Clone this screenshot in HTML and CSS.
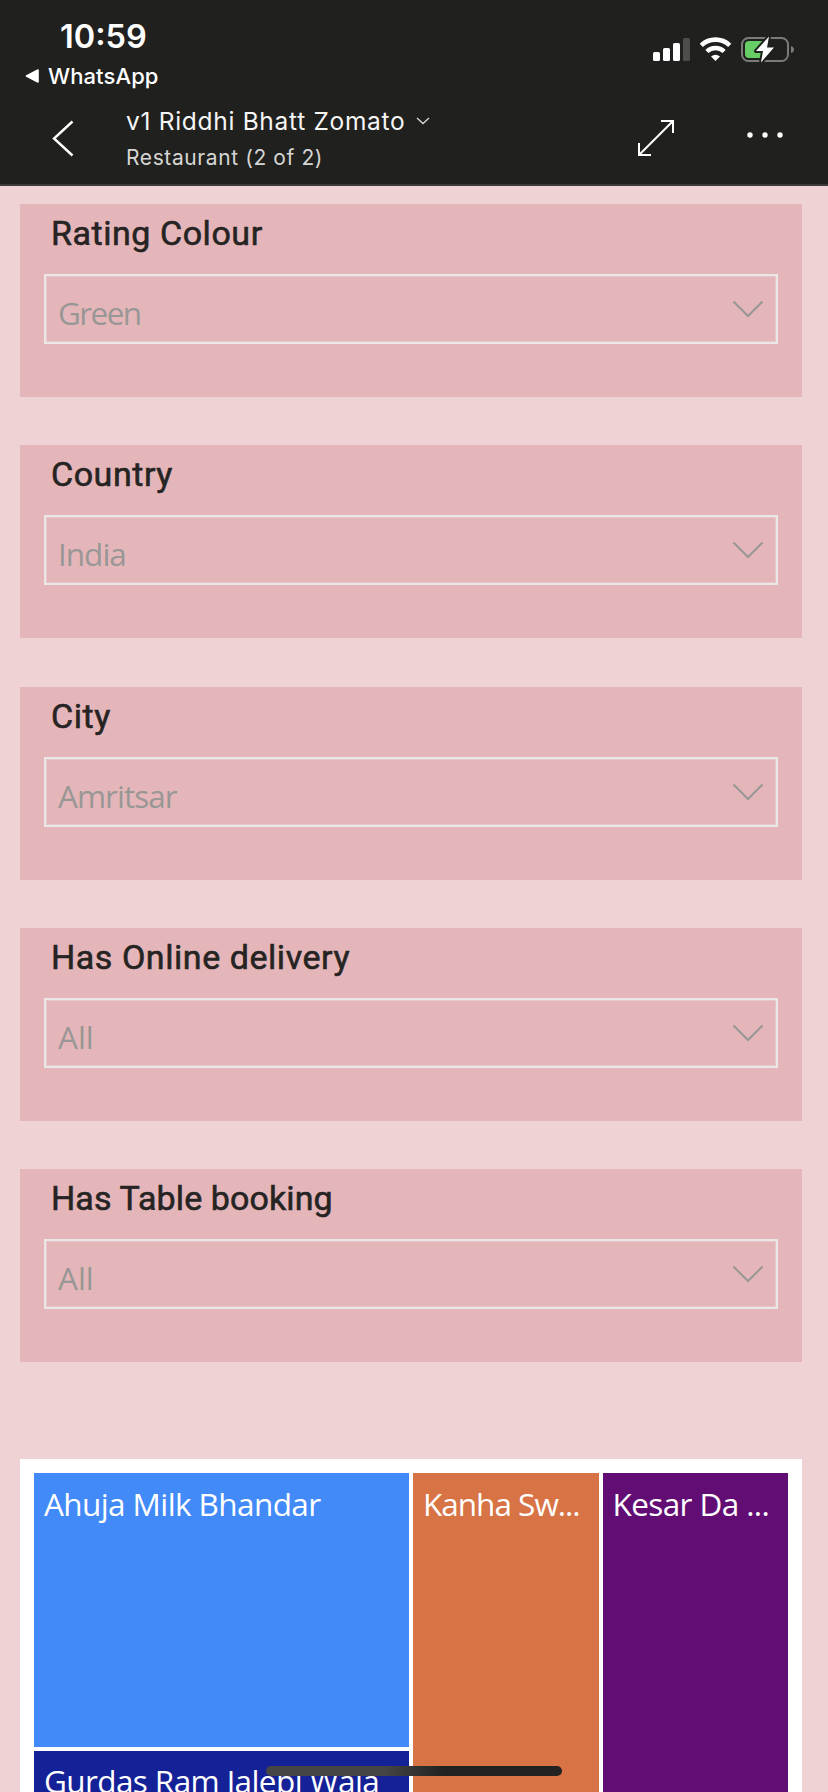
FILE: index.html
```html
<!DOCTYPE html>
<html lang="en">
<head>
<meta charset="utf-8">
<title>Restaurant report</title>
<link rel="stylesheet" href="styles.css">
</head>
<body>
<header class="header">
  <div class="status">
    <div class="status-left">
      <span class="time">10:59</span>
      <div class="back-app">
        <svg width="15" height="14" viewBox="0 0 15 14"><path d="M13 1 L1.5 7 L13 13 Z" fill="#fff" stroke="#fff" stroke-width="1.6" stroke-linejoin="round"/></svg>
        <span class="app-name">WhatsApp</span>
      </div>
    </div>
    <svg class="indicators" width="144" height="28" viewBox="651 35 144 28">
      <g fill="#fff">
        <rect x="653" y="52" width="7" height="9" rx="1.6"/>
        <rect x="663" y="48" width="7" height="13" rx="1.6"/>
        <rect x="673" y="43" width="7" height="18" rx="1.6"/>
        <rect x="683" y="38" width="7" height="23" rx="1.6" fill="#4d4d4c"/>
      </g>
      <g fill="none" stroke="#fff">
        <path d="M701.3 45.3 A20.5 20.5 0 0 1 729.7 45.3" stroke-width="4.6"/>
        <path d="M706.9 51.5 A12.3 12.3 0 0 1 724.1 51.5" stroke-width="4.4"/>
      </g>
      <path d="M711 56.6 Q715.5 52.8 720 56.6 L715.5 61 Z" fill="#fff"/>
      <rect x="742" y="38" width="46" height="23" rx="6.5" fill="none" stroke="#7b7b7a" stroke-width="2"/>
      <path d="M791 46 Q794 47 794 49.5 Q794 52 791 53 Z" fill="#7b7b7a"/>
      <rect x="745" y="41" width="20" height="17" rx="4" fill="#67ce67"/>
      <path d="M769 36.5 L756 51 H763 L761 62.5 L774 47.5 H767 Z" fill="#fff" stroke="#20201e" stroke-width="4" stroke-linejoin="round"/>
      <path d="M769 36.5 L756 51 H763 L761 62.5 L774 47.5 H767 Z" fill="#fff"/>
    </svg>
  </div>
  <div class="nav">
    <svg class="back" width="24" height="38" viewBox="0 0 24 38"><path d="M21.5 2.5 L3 19.5 L21.5 36.5" fill="none" stroke="#fff" stroke-width="2.4"/></svg>
    <div class="titles">
      <div class="title-row">
        <span class="title">v1 Riddhi Bhatt Zomato</span>
        <svg width="14" height="8" viewBox="0 0 14 8"><path d="M1 1 L7 6.6 L13 1" fill="none" stroke="#d8d8d8" stroke-width="1.3"/></svg>
      </div>
      <span class="subtitle">Restaurant (2 of 2)</span>
    </div>
    <svg class="expand" width="38" height="38" viewBox="0 0 38 38"><path d="M2.5 35.5 L35.5 2.5 M24 2 H36 V14 M2 24 V36 H14" fill="none" stroke="#fff" stroke-width="2"/></svg>
    <svg class="more" width="38" height="8" viewBox="0 0 38 8" fill="#fff"><circle cx="4" cy="4" r="2.7"/><circle cx="19" cy="4" r="2.7"/><circle cx="34" cy="4" r="2.7"/></svg>
  </div>
</header>
<main class="report">
  <section class="slicer">
    <h2 class="slicer-title">Rating Colour</h2>
    <div class="select"><span class="tightest">Green</span><svg class="chevron" width="32" height="18" viewBox="0 0 32 18"><path d="M1.5 1.5 L16 16 L30.5 1.5"/></svg></div>
  </section>
  <section class="slicer">
    <h2 class="slicer-title">Country</h2>
    <div class="select"><span class="tighter">India</span><svg class="chevron" width="32" height="18" viewBox="0 0 32 18"><path d="M1.5 1.5 L16 16 L30.5 1.5"/></svg></div>
  </section>
  <section class="slicer">
    <h2 class="slicer-title">City</h2>
    <div class="select"><span class="tighter">Amritsar</span><svg class="chevron" width="32" height="18" viewBox="0 0 32 18"><path d="M1.5 1.5 L16 16 L30.5 1.5"/></svg></div>
  </section>
  <section class="slicer">
    <h2 class="slicer-title">Has Online delivery</h2>
    <div class="select"><span>All</span><svg class="chevron" width="32" height="18" viewBox="0 0 32 18"><path d="M1.5 1.5 L16 16 L30.5 1.5"/></svg></div>
  </section>
  <section class="slicer">
    <h2 class="slicer-title snug">Has Table booking</h2>
    <div class="select"><span>All</span><svg class="chevron" width="32" height="18" viewBox="0 0 32 18"><path d="M1.5 1.5 L16 16 L30.5 1.5"/></svg></div>
  </section>
  <section class="treemap">
    <div class="tile blue tight">Ahuja Milk Bhandar</div>
    <div class="tile orange tighter">Kanha Sw...</div>
    <div class="tile purple tight">Kesar Da ...</div>
    <div class="tile navy tight">Gurdas Ram Jalebi Wala</div>
  </section>
</main>
<div class="home-indicator"></div>
</body>
</html>
```
FILE: styles.css
```css
* { box-sizing: border-box; }
html, body { margin: 0; }
body {
  width: 828px;
  height: 1792px;
  overflow: hidden;
  position: relative;
  display: flex;
  flex-direction: column;
  background: #eed2d4;
  font-family: "Open Sans", "Noto Sans", sans-serif;
}
svg { display: block; flex: none; }
.header {
  flex: none;
  height: 186px;
  background: #20201e;
  border-bottom: 2px solid #3b3a39;
  color: #fff;
  font-family: Inter, Roboto, sans-serif;
}
.status {
  height: 98px;
  display: flex;
  justify-content: space-between;
  padding: 16px 33px 0 25px;
}
.status-left { display: flex; flex-direction: column; }
.time { margin: 1px 0 0 35px; font-size: 32.5px; line-height: 40px; font-weight: 600; }
.back-app { display: flex; align-items: center; gap: 8px; height: 28px; margin-top: 5px; }
.app-name { font-size: 22px; font-weight: 500; letter-spacing: 0.1px; }
.indicators { margin-top: 19px; }
.nav { display: flex; height: 86px; padding-left: 51px; }
.back { margin-top: 21px; }
.titles { margin-left: 51px; width: 511px; padding-top: 8px; }
.title-row { display: flex; align-items: center; gap: 11px; height: 30px; }
.title { font-size: 24.5px; color: #f5f5f5; letter-spacing: 0.7px; white-space: nowrap; }
.subtitle { display: block; margin-top: 8px; font-size: 21px; line-height: 28px; color: #d6d6d4; letter-spacing: 0.6px; }
.expand { margin-top: 21px; }
.more { margin: 33px 0 0 71px; }
.report { flex: 1; padding: 18px 26px 0 20px; }
.slicer {
  height: 193px;
  margin-bottom: 48.25px;
  padding: 8px 24px 0;
  background: #e5b6b9;
}
.slicer-title {
  margin: 0 0 20px 7px;
  height: 42px;
  line-height: 42px;
  font-family: Roboto, sans-serif;
  font-size: 34px;
  font-weight: 400;
  -webkit-text-stroke: 0.6px #252423;
  letter-spacing: 0.55px;
  color: #252423;
  white-space: nowrap;
}
.slicer-title.snug { letter-spacing: 0.1px; }
.select {
  height: 70px;
  padding: 6px 12px 0 12px;
  border: 2px solid #ebe7e7;
  box-shadow: inset 0 0 0 1px rgba(235, 231, 231, 0.35);
  display: flex;
  justify-content: space-between;
  font-size: 31.5px;
  line-height: 62px;
  color: #999796;
}
.tight { letter-spacing: -0.6px; }
.tighter { letter-spacing: -1px; }
.tightest { letter-spacing: -1.6px; }
.chevron { margin-top: 18px; fill: none; stroke: #999796; stroke-width: 2; }
.treemap {
  margin-top: 97px;
  height: 420px;
  padding: 14px;
  background: #fff;
  display: grid;
  grid-template-columns: 375px 185.5px 185.5px;
  grid-template-rows: 273.5px 1fr;
  gap: 4px;
}
.tile {
  padding: 10px 0 0 10px;
  overflow: hidden;
  color: #fff;
  font-size: 31.5px;
  line-height: 42px;
  white-space: nowrap;
}
.blue { background: #418af8; }
.orange { background: #d77345; grid-row: 1 / 3; grid-column: 2; }
.purple { background: #610d74; grid-row: 1 / 3; grid-column: 3; }
.navy { background: #152196; grid-row: 2; grid-column: 1; padding-top: 9px; }
.home-indicator {
  position: absolute;
  left: 266px;
  top: 1766px;
  width: 296px;
  height: 10px;
  border-radius: 5px;
  background: linear-gradient(90deg, #454545 0 40%, #222 60%);
}
```
